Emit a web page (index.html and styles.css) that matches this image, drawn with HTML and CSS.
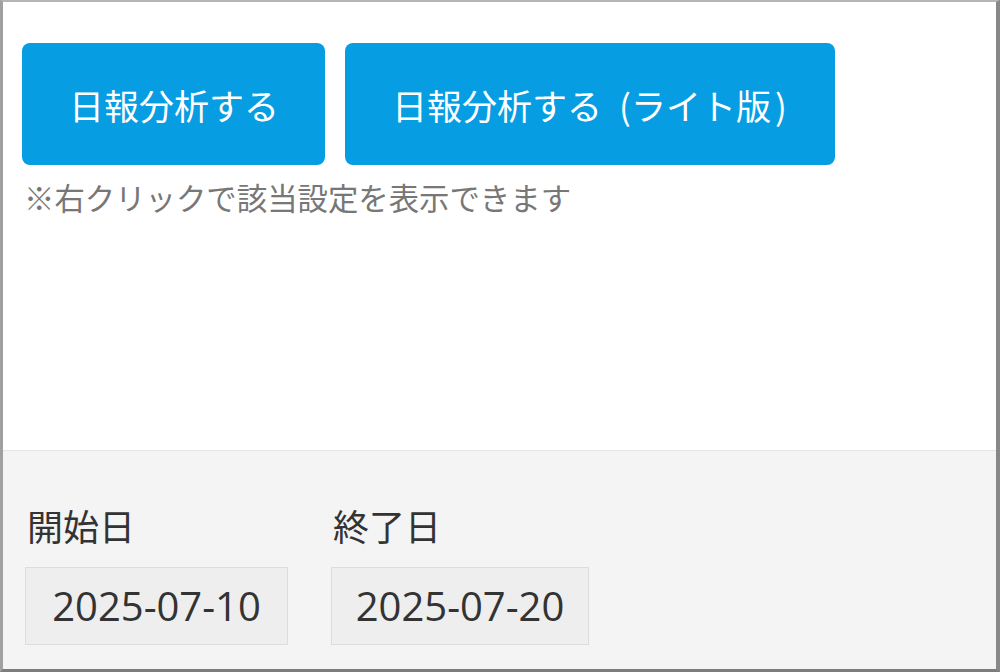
FILE: index.html
```html
<!DOCTYPE html>
<html lang="ja">
<head>
<meta charset="utf-8">
<link rel="stylesheet" href="styles.css">
</head>
<body>
<div class="panel">
  <div class="top">
    <div class="actions">
      <button class="btn">日報分析する</button>
      <button class="btn btn-lite">日報分析する<span class="paren">(</span>ライト版<span class="paren-end">)</span></button>
    </div>
    <p class="note">※右クリックで該当設定を表示できます</p>
  </div>
  <div class="bottom">
    <div class="field">
      <div class="label">開始日</div>
      <div class="date">2025-07-10</div>
    </div>
    <div class="field field-2">
      <div class="label">終了日</div>
      <div class="date">2025-07-20</div>
    </div>
  </div>
</div>
</body>
</html>
```
FILE: styles.css
```css
html, body {
  margin: 0;
  padding: 0;
  background: #ffffff;
}
.panel {
  box-sizing: border-box;
  width: 1000px;
  height: 672px;
  border-top: 2px solid #b4b4b4;
  border-left: 3px solid #a0a0a0;
  border-right: 4px solid #888888;
  border-bottom: 3px solid #7c7c7c;
  display: flex;
  flex-direction: column;
  font-family: "Noto Sans CJK JP", sans-serif;
}
.top {
  flex: 1;
  background: #ffffff;
  padding: 41px 0 0 19px;
  border-bottom: 1px solid #e2e6e8;
}
.actions {
  display: flex;
  gap: 20px;
}
.btn {
  height: 122px;
  padding: 0 46px 0 47px;
  border: none;
  border-radius: 8px;
  background: #069de3;
  color: #ffffff;
  font-family: "Noto Sans CJK JP", sans-serif;
  font-size: 35px;
  line-height: 1;
  white-space: nowrap;
}
.btn-lite {
  padding: 0 48px 0 47px;
}
.paren {
  margin-left: 17px;
  margin-right: 0;
}
.paren-end {
  margin-left: 4px;
}
.note {
  margin: 14px 0 0 2px;
  color: #777777;
  font-size: 30.4px;
  line-height: 36px;
}
.bottom {
  height: 218px;
  box-sizing: border-box;
  background: #f4f4f4;
  padding: 53px 0 0 22px;
  display: flex;
  gap: 43px;
}
.field {
  display: flex;
  flex-direction: column;
  width: 263px;
}
.field-2 {
  width: 258px;
}
.label {
  color: #333333;
  font-size: 36px;
  line-height: 43px;
  padding-left: 2px;
}
.date {
  margin-top: 20px;
  box-sizing: border-box;
  height: 78px;
  border: 1px solid #dddddd;
  background: #eeeeee;
  color: #333333;
  font-family: "Open Sans", sans-serif;
  font-size: 40px;
  line-height: 76px;
  text-align: center;
}
```
